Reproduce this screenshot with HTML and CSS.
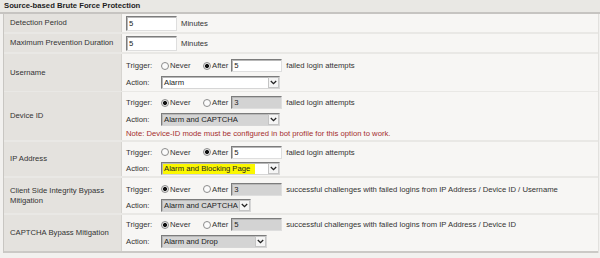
FILE: index.html
```html
<!DOCTYPE html>
<html>
<head>
<meta charset="utf-8">
<link rel="stylesheet" href="styles.css">
</head>
<body>
<div class="hdr">Source-based Brute Force Protection</div>
<div class="tbl">
  <div class="row h20">
    <div class="lbl">Detection Period</div>
    <div class="val">
      <div class="line"><input class="num big" type="text" value="5"><span class="tail">Minutes</span></div>
    </div>
  </div>
  <div class="row h20">
    <div class="lbl">Maximum Prevention Duration</div>
    <div class="val">
      <div class="line"><input class="num big" type="text" value="5"><span class="tail">Minutes</span></div>
    </div>
  </div>
  <div class="row h38">
    <div class="lbl">Username</div>
    <div class="val p3">
      <div class="line">
        <span class="key">Trigger:</span>
        <label class="opt never"><input class="rad" type="radio" name="u">Never</label>
        <label class="opt after"><input class="rad" type="radio" name="u" checked>After</label>
        <input class="num" type="text" value="5"><span class="tail">failed login attempts</span>
      </div>
      <div class="line">
        <span class="key">Action:</span>
        <span class="sel w119"><span class="sel-text">Alarm</span><span class="sel-btn"><svg width="7" height="5" viewBox="0 0 7 5"><path d="M0.8 1 L3.5 3.7 L6.2 1" fill="none" stroke="#222" stroke-width="1.3"/></svg></span></span>
      </div>
    </div>
  </div>
  <div class="row h50">
    <div class="lbl">Device ID</div>
    <div class="val p2">
      <div class="line">
        <span class="key">Trigger:</span>
        <label class="opt never"><input class="rad" type="radio" name="d" checked>Never</label>
        <label class="opt after"><input class="rad" type="radio" name="d">After</label>
        <input class="num dis" type="text" value="3"><span class="tail">failed login attempts</span>
      </div>
      <div class="line l16">
        <span class="key">Action:</span>
        <span class="sel w119 dis"><span class="sel-text">Alarm and CAPTCHA</span><span class="sel-btn"><svg width="7" height="5" viewBox="0 0 7 5"><path d="M0.8 1 L3.5 3.7 L6.2 1" fill="none" stroke="#222" stroke-width="1.3"/></svg></span></span>
      </div>
      <div class="line note">Note: Device-ID mode must be configured in bot profile for this option to work.</div>
    </div>
  </div>
  <div class="row h36">
    <div class="lbl">IP Address</div>
    <div class="val p2">
      <div class="line l16">
        <span class="key">Trigger:</span>
        <label class="opt never"><input class="rad" type="radio" name="i">Never</label>
        <label class="opt after"><input class="rad" type="radio" name="i" checked>After</label>
        <input class="num" type="text" value="5"><span class="tail">failed login attempts</span>
      </div>
      <div class="line l16">
        <span class="key">Action:</span>
        <span class="sel w119"><span class="sel-text"><span class="hl">Alarm and Blocking Page</span></span><span class="sel-btn"><svg width="7" height="5" viewBox="0 0 7 5"><path d="M0.8 1 L3.5 3.7 L6.2 1" fill="none" stroke="#222" stroke-width="1.3"/></svg></span></span>
      </div>
    </div>
  </div>
  <div class="row h37">
    <div class="lbl">Client Side Integrity Bypass Mitigation</div>
    <div class="val p3">
      <div class="line l16">
        <span class="key">Trigger:</span>
        <label class="opt never"><input class="rad" type="radio" name="c" checked>Never</label>
        <label class="opt after"><input class="rad" type="radio" name="c">After</label>
        <input class="num dis" type="text" value="3"><span class="tail">successful challenges with failed logins from IP Address / Device ID / Username</span>
      </div>
      <div class="line l16">
        <span class="key">Action:</span>
        <span class="sel w89 dis"><span class="sel-text">Alarm and CAPTCHA</span><span class="sel-btn"><svg width="7" height="5" viewBox="0 0 7 5"><path d="M0.8 1 L3.5 3.7 L6.2 1" fill="none" stroke="#222" stroke-width="1.3"/></svg></span></span>
      </div>
    </div>
  </div>
  <div class="row h38 last">
    <div class="lbl">CAPTCHA Bypass Mitigation</div>
    <div class="val p1">
      <div class="line">
        <span class="key">Trigger:</span>
        <label class="opt never"><input class="rad" type="radio" name="p" checked>Never</label>
        <label class="opt after"><input class="rad" type="radio" name="p">After</label>
        <input class="num dis" type="text" value="5"><span class="tail">successful challenges with failed logins from IP Address / Device ID</span>
      </div>
      <div class="line">
        <span class="key">Action:</span>
        <span class="sel w105 dis"><span class="sel-text">Alarm and Drop</span><span class="sel-btn"><svg width="7" height="5" viewBox="0 0 7 5"><path d="M0.8 1 L3.5 3.7 L6.2 1" fill="none" stroke="#222" stroke-width="1.3"/></svg></span></span>
      </div>
    </div>
  </div>
</div>
</body>
</html>
```
FILE: styles.css
```css
* { box-sizing: border-box; }

body {
  margin: 0;
  width: 600px;
  height: 258px;
  overflow: hidden;
  background: #f2f1ef;
  font-family: "Liberation Sans", Arial, sans-serif;
  font-size: 7.7px;
  color: #2e2e2e;
}

.hdr {
  height: 14px;
  line-height: 12px;
  padding-left: 4px;
  font-weight: bold;
  color: #1e1e1e;
  background: #e9e8e4;
  border-bottom: 2px solid #c6c4c1;
}

.tbl {
  margin-left: 3px;
  width: 596px;
  border-left: 1px solid #c8c6c2;
  border-right: 1px solid #e2e1de;
}

.row {
  display: grid;
  grid-template-columns: 118px 1fr;
  border-bottom: 2px solid #e9e8e5;
}
.row.last { border-bottom-color: #cbc9c6; }

.h20 { height: 20px; }
.h36 { height: 36px; }
.h37 { height: 37px; }
.h38 { height: 38px; }
.h50 { height: 50px; }

.lbl {
  background: #e4e2de;
  border-right: 1px solid #d6d4d0;
  padding: 0 4px 0 6px;
  display: flex;
  align-items: center;
  line-height: 10px;
  color: #333;
}

.val {
  background: #f7f6f4;
  padding-left: 4px;
  display: flex;
  flex-direction: column;
  justify-content: center;
}
.val.p1 { justify-content: flex-start; padding-top: 1px; }
.val.p2 { justify-content: flex-start; padding-top: 2px; }
.val.p3 { justify-content: flex-start; padding-top: 3px; }

.line {
  display: flex;
  align-items: center;
  height: 17px;
  white-space: nowrap;
}
.line.l16 { height: 16px; }
.line.note { height: 13px; color: #a52e2e; }

.key { width: 35px; color: #333; }

.opt {
  display: inline-flex;
  align-items: center;
  color: #333;
}
.opt.never { width: 42px; }
.opt.after { margin-right: 3px; }

.rad {
  -webkit-appearance: none;
  appearance: none;
  width: 8px;
  height: 8px;
  margin: 0 1px 0 0;
  border: 1px solid #8c8c8c;
  border-radius: 50%;
  background: #fbfbfb;
}
.rad:checked {
  background: radial-gradient(circle, #111 0, #111 1.7px, #e6e6e6 2.3px);
}

.num {
  width: 51px;
  height: 13px;
  margin: 0;
  padding: 0 2px;
  font: inherit;
  color: #222;
  background: #fff;
  border: 1px solid;
  border-color: #7c7c7c #dedede #dedede #7c7c7c;
  box-shadow: inset 1px 1px 0 #b8b8b8;
  outline: none;
}
.num.big { height: 15px; }
.num.dis { background: #d3d3d3; }

.tail { margin-left: 4px; color: #333; }

.sel {
  display: inline-flex;
  height: 13px;
  background: #fff;
  border: 1px solid;
  border-color: #7c7c7c #d6d6d6 #d6d6d6 #7c7c7c;
  box-shadow: inset 1px 1px 0 #b8b8b8;
}
.sel.dis { background: #d4d4d4; }
.w119 { width: 119px; }
.w105 { width: 106px; }
.w89 { width: 90px; }

.sel-text {
  flex: 1;
  padding: 1px 0 0 2px;
  line-height: 10px;
  overflow: hidden;
  color: #222;
}
.hl {
  display: inline-block;
  width: 92px;
  margin-left: -1px;
  padding-left: 1px;
  background: #fbf700;
}

.sel-btn {
  width: 11px;
  background: #f5f5f5;
  border: 1px solid #c4c4c4;
  display: flex;
  align-items: center;
  justify-content: center;
}
```
